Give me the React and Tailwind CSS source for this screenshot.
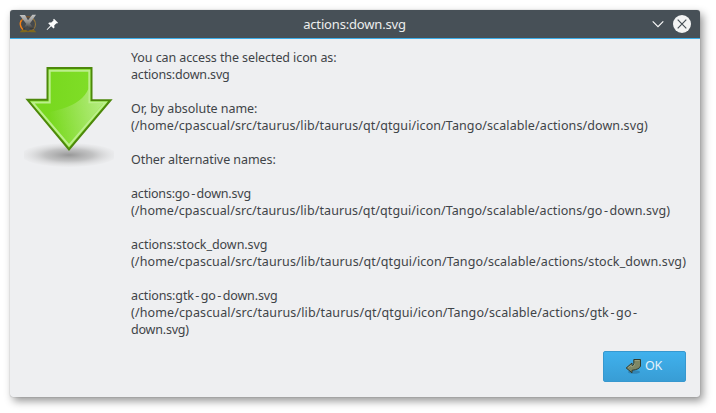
const lines = [
  { text: 'You can access the selected icon as:', track: 'tracking-[-0.09px]' },
  { text: 'actions:down.svg', track: 'tracking-[-0.17px]' },
  null,
  { text: 'Or, by absolute name:', track: 'tracking-[-0.05px]' },
  { text: '(/home/cpascual/src/taurus/lib/taurus/qt/qtgui/icon/Tango/scalable/actions/down.svg)', track: 'tracking-[0.098px]' },
  null,
  { text: 'Other alternative names:', track: 'tracking-[-0.07px]' },
  null,
  { text: 'actions:go-down.svg', track: 'tracking-[-0.19px]' },
  { text: '(/home/cpascual/src/taurus/lib/taurus/qt/qtgui/icon/Tango/scalable/actions/go-down.svg)', track: 'tracking-[0.095px]' },
  null,
  { text: 'actions:stock_down.svg', track: 'tracking-[-0.05px]' },
  { text: '(/home/cpascual/src/taurus/lib/taurus/qt/qtgui/icon/Tango/scalable/actions/stock_down.svg)', track: 'tracking-[0.113px]' },
  null,
  { text: 'actions:gtk-go-down.svg', track: 'tracking-[-0.13px]' },
  { text: '(/home/cpascual/src/taurus/lib/taurus/qt/qtgui/icon/Tango/scalable/actions/gtk-go-', track: 'tracking-[0.13px]' },
  { text: 'down.svg)', track: 'tracking-[-0.2px]' },
];

// Gives hyphens a little more room than the typeface does.
function Line({ text }) {
  return text.split(/(-)/).map((part, i) =>
    part === '-' ? <span key={i} className="mx-[1.5px]">-</span> : part
  );
}

function AppIcon() {
  return (
    <svg width="20" height="20" viewBox="0 0 20 20" className="shrink-0">
      <defs>
        <linearGradient id="steel" x1="0" y1="0" x2="0" y2="1">
          <stop offset="0" stopColor="#c4c5c5" />
          <stop offset="0.5" stopColor="#8d8d8c" />
          <stop offset="1" stopColor="#2d2e2c" />
        </linearGradient>
        <linearGradient id="ring" x1="0" y1="0" x2="1" y2="0">
          <stop offset="0" stopColor="#ef7d12" />
          <stop offset="0.45" stopColor="#8c531b" />
          <stop offset="1" stopColor="#96783b" />
        </linearGradient>
      </defs>
      <circle cx="10" cy="10.300" r="7.500" fill="#40352e" fillOpacity="0.25" stroke="url(#ring)" strokeWidth="1.100" />
      <path d="M3 6.500Q.8 11 4.500 15" fill="none" stroke="#f38118" strokeWidth="1.200" />
      <path d="M1.500 18.200 4 16h4l2 1 2-1h4l2.500 2.200H13l-3-.8-3 .8z" fill="#80691f" />
      <path d="M1.500 1h5.500L10 6.300 14.300.8h3.700L12 9.500 16 15h-4L9.300 11.800 6.500 15.300 5 15.500 8.200 9.800z" fill="url(#steel)" />
    </svg>
  );
}

function PinIcon() {
  return (
    <svg width="13" height="13" viewBox="0 0 13 13" className="shrink-0" fill="#fcfcfc">
      <path d="M8 .8 12 4.8 11.2 5.6 10.4 5.3 8.2 7.6 8.5 9.5 7.5 10.5 5.2 8.3 1.2 12 .6 11.4 4.4 7.5 2.2 5.3 3.3 4.4 5.3 4.6 7.5 2.5 7.2 1.6z" />
    </svg>
  );
}

function DownArrow() {
  return (
    <svg width="90" height="102" viewBox="0 0 90 102">
      <defs>
        <radialGradient id="shade">
          <stop offset="0" stopColor="#888" stopOpacity="0.85" />
          <stop offset="0.5" stopColor="#a4a4a4" stopOpacity="0.6" />
          <stop offset="1" stopColor="#d4d4d4" stopOpacity="0.1" />
        </radialGradient>
        <linearGradient id="green" x1="0" y1="0" x2="1" y2="0">
          <stop offset="0.2" stopColor="#78d81e" />
          <stop offset="1" stopColor="#83e02b" />
        </linearGradient>
        <linearGradient id="gloss" gradientUnits="userSpaceOnUse" x1="26" y1="52" x2="76" y2="40">
          <stop offset="0" stopColor="#fff" stopOpacity="0" />
          <stop offset="1" stopColor="#fff" stopOpacity="0.38" />
        </linearGradient>
      </defs>
      <ellipse cx="45" cy="88" rx="48" ry="12" fill="url(#shade)" />
      <path d="M23.500 1H67.500V33.200H86.500L45 82.500 3.500 32.800H23.500z" fill="url(#green)" stroke="#4d880b" strokeWidth="2" />
      <path d="M25.700 3.700H65.300V35.400H81.500L45 78.500 8.500 35.400H25.700z" fill="none" stroke="#bcee8c" strokeWidth="2" />
      <path d="M64.300 22Q59 35 39 41.500Q21 47 17 46L45 77 79 36.500H64.300z" fill="url(#gloss)" />
    </svg>
  );
}

function ReturnIcon() {
  return (
    <svg width="17" height="17" viewBox="0 0 17 17" className="shrink-0">
      <ellipse cx="9" cy="14" rx="6" ry="1.800" fill="#235f86" fillOpacity="0.45" />
      <path d="M8.800 1.500h6.700V8Q14.500 11.500 7 12.300v2.500L1.200 10 7 5v2.800Q8.800 7.500 8.800 5.500z" fill="#7d8765" stroke="#343b2b" strokeWidth="1" strokeLinejoin="round" />
      <path d="M9.800 2.500h4.700M3 9.800 6.200 7v1.800Q9.800 8.500 9.800 5.500" fill="none" stroke="#a3ab8c" strokeWidth="0.700" />
    </svg>
  );
}

export default function App() {
  return (
    <div className="h-[413px] w-[716px] overflow-hidden bg-white pt-[10px] pl-[10px] font-['Noto_Sans',sans-serif]">
      <div className="flex h-[387px] w-[690px] flex-col overflow-hidden rounded-[3px] bg-[#eeeff1] shadow-[3px_4px_8px_0px_rgba(0,0,0,0.42),0_0_1px_rgba(0,0,0,0.4)]">
        <header className="flex h-[29px] shrink-0 items-center border-b border-[#3daee9] bg-[#475057] pr-[9px] pl-[8px]">
          <AppIcon />
          <div className="ml-[8px] flex"><PinIcon /></div>
          <h1 className="flex-1 pr-[2px] text-center text-[13px] leading-[28px] tracking-[-0.17px] whitespace-nowrap text-[#eceded]">actions:down.svg</h1>
          <svg width="12" height="8" viewBox="0 0 12 8" fill="none" stroke="#fcfcfc" strokeWidth="1.100"><path d="M.7 1.300 6 6.600 11.300 1.300" /></svg>
          <svg width="18" height="18" viewBox="0 0 18 18" className="ml-[9px]"><circle cx="9" cy="9" r="9" fill="#f3f4f4" /><path d="m4.700 4.700 8.600 8.600m0-8.600-8.600 8.600" stroke="#475057" strokeWidth="1.200" /></svg>
        </header>
        <main className="flex flex-1 flex-col">
          <div className="flex h-[312px] shrink-0">
            <div className="w-[121px] shrink-0 pt-[28px] pl-[14px]"><DownArrow /></div>
            <div className="pt-[10px] text-[12.500px] leading-[17px] text-[#3f4448]">
              {lines.map((line, i) => (
                <p key={i} className={`h-[17px] whitespace-pre ${line ? line.track : ''}`}>{line && <Line text={line.text} />}</p>
              ))}
            </div>
          </div>
          <div className="flex justify-end pr-[14px]">
            <button className="flex h-[31px] w-[83px] items-center justify-center gap-[3px] rounded-[2px] border border-[#3798cf] bg-linear-to-b from-[#40b1ed] to-[#389dd5] pr-[2px] pb-px text-[12.500px] tracking-[-0.2px] text-[#e6f2fa]">
              <ReturnIcon />
              <span>OK</span>
            </button>
          </div>
        </main>
      </div>
    </div>
  );
}
